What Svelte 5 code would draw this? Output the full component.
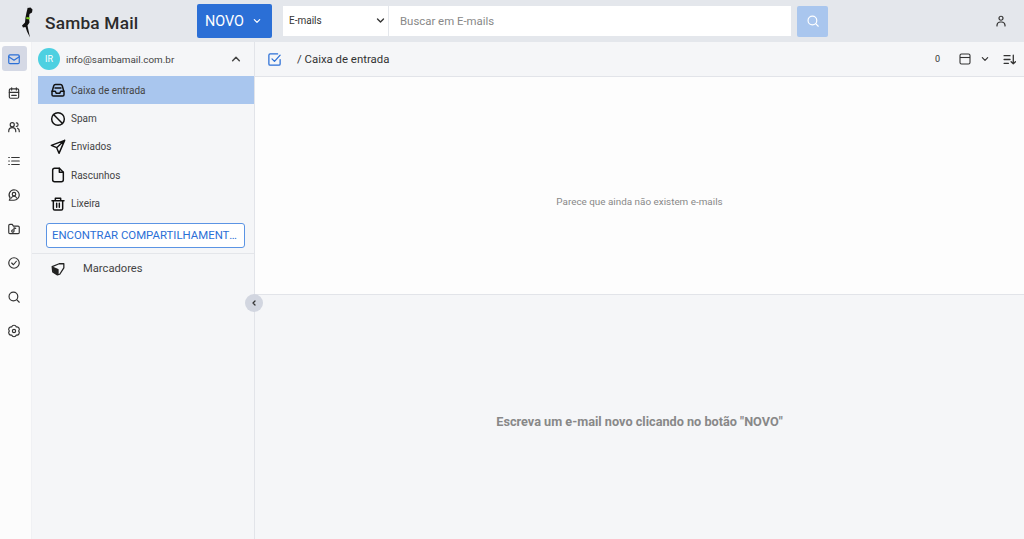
<script lang="ts">
	const rail = ['mail', 'calendar', 'users', 'list', 'chat', 'folder', 'check', 'search', 'gear'];
	const folders = [
		{ icon: 'inbox', label: 'Caixa de entrada', active: true },
		{ icon: 'spam', label: 'Spam' },
		{ icon: 'send', label: 'Enviados' },
		{ icon: 'draft', label: 'Rascunhos' },
		{ icon: 'trash', label: 'Lixeira' }
	];
</script>

{#snippet icon(name, size = 16, weight = 2)}
	<svg width={size} height={size} viewBox="0 0 24 24" fill="none" stroke="currentColor" stroke-width={weight} stroke-linecap="round" stroke-linejoin="round">
		{#if name === 'mail'}
			<rect x="3" y="5" width="18" height="15" rx="2" />
			<path d="M3 8l9 6 9-6" />
		{:else if name === 'calendar'}
			<rect x="4" y="5" width="16" height="16" rx="2" />
			<path d="M8 3v4M16 3v4M4 11h16M8 16h8" />
		{:else if name === 'users'}
			<circle cx="9" cy="8" r="3.5" />
			<path d="M3 20v-1a6 6 0 0 1 12 0v1M16 5a3 3 0 0 1 0 6M18 14a5 5 0 0 1 3 5v1" />
		{:else if name === 'list'}
			<path d="M8 6h13M8 12h13M8 18h13M3 6h1M3 12h1M3 18h1" />
		{:else if name === 'chat'}
			<path d="M12 3a9 9 0 0 1 0 18H4l1.500-3.500A9 9 0 0 1 12 3z" />
			<circle cx="12" cy="10.500" r="3" />
			<path d="M7.500 17a5 5 0 0 1 9 0" />
		{:else if name === 'folder'}
			<path d="M3 6a2 2 0 0 1 2-2h4l2 3h8a2 2 0 0 1 2 2v9a2 2 0 0 1-2 2H5a2 2 0 0 1-2-2z" />
			<path d="M12 10v5M12 15a2 2 0 1 1-2-1.500M12 10l3 1" />
		{:else if name === 'check'}
			<circle cx="12" cy="12" r="9" />
			<path d="M8 12l3 3 5-6" />
		{:else if name === 'search'}
			<circle cx="11" cy="11" r="7.500" />
			<path d="M17 17l4 4" />
		{:else if name === 'gear'}
			<path d="M16 5.070A4.200 4.200 0 0 1 20 12a4.200 4.200 0 0 1-4 6.930 4.200 4.200 0 0 1-8 0A4.200 4.200 0 0 1 4 12a4.200 4.200 0 0 1 4-6.930 4.200 4.200 0 0 1 8 0z" />
			<circle cx="12" cy="12" r="2.800" />
		{:else if name === 'inbox'}
			<path d="M3 15l2.500-9a3 3 0 0 1 3-2.200h7a3 3 0 0 1 3 2.200L21 15v4a2 2 0 0 1-2 2H5a2 2 0 0 1-2-2z" />
			<path d="M3 14h5l1.500 3h5L16 14h5M7.500 9h9" />
		{:else if name === 'spam'}
			<circle cx="12" cy="12" r="9.500" />
			<path d="M5.300 5.300l13.400 13.400" />
		{:else if name === 'send'}
			<path d="M22 2L2 9.500l8 3.500 3.500 8.500zM10 13L22 2" />
		{:else if name === 'draft'}
			<path d="M14 2H7a3 3 0 0 0-3 3v14a3 3 0 0 0 3 3h10a3 3 0 0 0 3-3V8z" />
			<path d="M14 2v6h6" />
		{:else if name === 'trash'}
			<path d="M3 7h18M8 7V3.500h8V7M5 7v12a2 2 0 0 0 2 2h10a2 2 0 0 0 2-2V7M10 11v6M14 11v6" />
		{/if}
	</svg>
{/snippet}

{#snippet chevron(up = false, size = 10)}
	<svg class="chev" width={size} height={size} viewBox="0 0 12 12" fill="none" stroke="currentColor" stroke-width="1.800" stroke-linecap="round" stroke-linejoin="round">
		<path d={up ? 'M2 8l4-4 4 4' : 'M2 4l4 4 4-4'} />
	</svg>
{/snippet}

<div class="app">
	<header>
		<div class="brand">
			<svg class="logo" width="14" height="34" viewBox="0 0 14 34">
				<path d="M6 0l.500 4 3-.500 2 2-.500 3-2.500 1.500-.500 4.500 .500 4-2 3 1 5 1.500 7-3-6-1.500-4.500-2.500.500-1-2 3-3 .500-5 1-5 1-4z" fill="#111" />
				<path d="M5.500 13l3.500.500-.300 2-3.500-.500z" fill="#7ed321" />
			</svg>
			<span class="title">Samba Mail</span>
		</div>
		<button class="novo">NOVO {@render chevron(false, 8)}</button>
		<div class="search">
			<div class="select">E-mails {@render chevron(false, 9)}</div>
			<div class="input">Buscar em E-mails</div>
		</div>
		<button class="go">{@render icon('search', 14)}</button>
		<span class="user">
			<svg width="12" height="12" viewBox="0 0 24 24" fill="none" stroke="currentColor" stroke-width="2.400" stroke-linecap="round">
				<circle cx="12" cy="6.500" r="4" />
				<path d="M4 22v-2a7 7 0 0 1 7-6h2a7 7 0 0 1 7 6v2" />
			</svg>
		</span>
	</header>

	<div class="body">
		<nav class="rail">
			{#each rail as name, i}
				<span class="rail-item" class:current={i === 0}>{@render icon(name, 14)}</span>
			{/each}
		</nav>

		<aside>
			<div class="account">
				<span class="avatar">IR</span>
				<span class="email">info@sambamail.com.br</span>
				{@render chevron(true, 10)}
			</div>
			<ul>
				{#each folders as folder}
					<li class:active={folder.active}>
						{@render icon(folder.icon, 16, 2.200)}
						<span>{folder.label}</span>
					</li>
				{/each}
			</ul>
			<button class="share">ENCONTRAR COMPARTILHAMENTOS</button>
			<div class="labels">
				<svg width="14" height="14" viewBox="0 0 24 24" fill="none" stroke="#222" stroke-width="2.200" stroke-linejoin="round">
					<path d="M2 8l12-5h8v7l-7 11-4 1-8-5z" />
					<path d="M3 9l9 4v8l-7-4z" fill="#222" />
				</svg>
				<span>Marcadores</span>
			</div>
			<span class="collapse">
				<svg width="6" height="6" viewBox="0 0 12 12" fill="none" stroke="#333" stroke-width="2.500" stroke-linecap="round" stroke-linejoin="round"><path d="M8 2L4 6l4 4" /></svg>
			</span>
		</aside>

		<main>
			<div class="toolbar">
				<svg class="select-all" width="15" height="15" viewBox="0 0 24 24" fill="none" stroke="#2b6fd6" stroke-width="2" stroke-linecap="round" stroke-linejoin="round">
					<path d="M21 12v7a2 2 0 0 1-2 2H5a2 2 0 0 1-2-2V5a2 2 0 0 1 2-2h12" />
					<path d="M8 11l4 4 9-10" />
				</svg>
				<span class="crumb">/ Caixa de entrada</span>
				<span class="count">0</span>
				<svg class="layout" width="12" height="12" viewBox="0 0 24 24" fill="none" stroke="#333" stroke-width="2.200"><rect x="2" y="2" width="20" height="20" rx="3" /><path d="M2 9h20" /></svg>
				<span class="layout-chev">{@render chevron(false, 8)}</span>
				<svg class="sort" width="13" height="13" viewBox="0 0 24 24" fill="none" stroke="#333" stroke-width="2.400" stroke-linecap="round" stroke-linejoin="round"><path d="M2 5h11M2 12h11M2 19h8M19 4v16M15 16l4 4 4-4" /></svg>
			</div>
			<div class="list">Parece que ainda não existem e-mails</div>
			<div class="reader">Escreva um e-mail novo clicando no botão "NOVO"</div>
		</main>
	</div>
</div>

<style>
	:global(body) {
		margin: 0;
		overflow: hidden;
	}

	.app {
		height: 539px;
		display: flex;
		flex-direction: column;
		font-family: Roboto, 'Liberation Sans', sans-serif;
		color: #333;
	}

	button {
		font-family: inherit;
		border: 0;
		padding: 0;
	}

	header {
		height: 42px;
		flex: none;
		display: flex;
		align-items: center;
		background: #e4e7ec;
	}

	.brand {
		width: 197px;
		display: flex;
		align-items: center;
		padding-left: 21px;
		box-sizing: border-box;
	}

	.logo {
		margin-right: 10px;
	}

	.title {
		font-size: 17.300px;
		font-weight: 500;
		letter-spacing: 0.2px;
		color: #2b2b2b;
		padding-top: 3px;
	}

	.novo {
		width: 75px;
		height: 34px;
		background: #2b6fd6;
		color: #fff;
		font-size: 14.400px;
		border-radius: 2px;
		display: flex;
		align-items: center;
		justify-content: flex-start;
		padding-left: 8px;
		gap: 9px;
		margin-right: 11px;
	}

	.search {
		width: 508px;
		height: 30px;
		display: flex;
		gap: 1px;
		margin-right: 6px;
	}

	.select {
		width: 105px;
		background: #fff;
		font-size: 10px;
		display: flex;
		align-items: center;
		justify-content: space-between;
		padding: 0 3px 1px 6px;
		box-sizing: border-box;
	}

	.input {
		flex: 1;
		background: #fff;
		font-size: 11.400px;
		color: #888;
		display: flex;
		align-items: center;
		padding: 0 0 1px 11px;
	}

	.go {
		width: 31px;
		height: 31px;
		background: #a9c6ee;
		color: #fff;
		border-radius: 2px;
		display: flex;
		align-items: center;
		justify-content: center;
	}

	.user {
		margin-left: auto;
		margin-right: 17px;
		display: flex;
	}

	.body {
		flex: 1;
		display: flex;
		min-height: 0;
	}

	.rail {
		width: 32px;
		flex: none;
		background: #fcfcfc;
		display: flex;
		flex-direction: column;
		align-items: center;
		padding: 4px 3px 0 0;
		gap: 9px;
		box-sizing: border-box;
		border-right: 1px solid #f0f1f4;
		color: #333;
	}

	.rail-item {
		width: 25px;
		height: 25px;
		display: flex;
		align-items: center;
		justify-content: center;
		border-radius: 3px;
	}

	.rail-item.current {
		background: #d5d9e5;
		color: #2b6fd6;
	}

	aside {
		width: 223px;
		flex: none;
		position: relative;
		background: #f5f6f8;
		border-right: 1px solid #e2e4e9;
		box-sizing: border-box;
		padding-left: 6px;
	}

	.account {
		height: 34px;
		display: flex;
		align-items: center;
		color: #444;
		font-size: 9.900px;
		padding-right: 13px;
	}

	.avatar {
		width: 22px;
		height: 22px;
		border-radius: 50%;
		background: #4dd0e1;
		color: #fff;
		font-size: 9px;
		display: flex;
		align-items: center;
		justify-content: center;
		margin-right: 6px;
	}

	.email {
		flex: 1;
	}

	ul {
		list-style: none;
		margin: 0;
		padding: 0;
	}

	li {
		height: 28.400px;
		display: flex;
		align-items: center;
		padding-left: 11.500px;
		gap: 5.500px;
		font-size: 10px;
		color: #444;
		box-sizing: border-box;
	}

	li svg {
		color: #111;
		flex: none;
	}

	li.active {
		background: #a9c6ee;
	}

	.share {
		display: block;
		width: 199px;
		height: 25px;
		margin: 5px 0 5px 8px;
		background: #fff;
		border: 1px solid #5b94e4;
		border-radius: 3px;
		color: #2b6fd6;
		font-size: 11.400px;
		text-align: left;
		padding: 0 5px;
		white-space: nowrap;
		overflow: hidden;
		text-overflow: ellipsis;
	}

	.labels {
		margin-left: -6px;
		border-top: 1px solid #e4e6ea;
		height: 30px;
		display: flex;
		align-items: center;
		padding-left: 19px;
		gap: 18px;
		font-size: 11.200px;
		color: #444;
	}

	.collapse {
		position: absolute;
		right: -9px;
		top: 252px;
		width: 18px;
		height: 18px;
		border-radius: 50%;
		background: #d2d6e0;
		display: flex;
		align-items: center;
		justify-content: center;
		z-index: 1;
	}

	main {
		flex: 1;
		display: flex;
		flex-direction: column;
		min-width: 0;
	}

	.toolbar {
		height: 35px;
		flex: none;
		box-sizing: border-box;
		display: flex;
		align-items: center;
		background: #f5f6f8;
		border-bottom: 1px solid #e2e4e9;
		padding: 0 8px 0 12px;
	}

	.crumb {
		margin-left: 15px;
		font-size: 11.400px;
		color: #333;
	}

	.count {
		margin-left: auto;
		font-size: 9px;
		margin-right: 19px;
	}

	.layout-chev {
		display: flex;
		margin: 0 14px 0 10px;
		color: #333;
	}

	.list {
		height: 218px;
		flex: none;
		box-sizing: border-box;
		display: flex;
		align-items: center;
		justify-content: center;
		padding-top: 32px;
		background: #fdfdfd;
		border-bottom: 1px solid #e2e4e9;
		font-size: 9.900px;
		color: #888;
	}

	.reader {
		flex: 1;
		display: flex;
		align-items: center;
		justify-content: center;
		padding-top: 8px;
		background: #f5f6f8;
		font-size: 12.700px;
		font-weight: 700;
		color: #888;
	}
</style>
